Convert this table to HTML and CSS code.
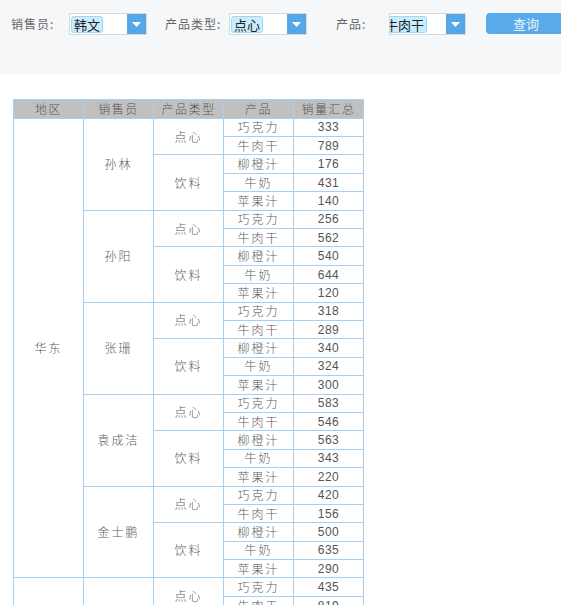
FILE: index.html
```html
<!DOCTYPE html>
<html lang="zh">
<head>
<meta charset="utf-8">
<title>销量汇总</title>
<link rel="stylesheet" href="styles.css">
</head>
<body>
<div class="toolbar">
  <label class="lbl lbl-1">销售员:</label>
  <div class="combo combo-1">
    <div class="combo-field"><span class="tag">韩文</span></div>
    <div class="combo-btn"><svg width="9" height="5" viewBox="0 0 9 5"><path d="M0 0h9L4.5 5z" fill="#fff"/></svg></div>
  </div>
  <label class="lbl lbl-2">产品类型:</label>
  <div class="combo combo-2">
    <div class="combo-field"><span class="tag">点心</span></div>
    <div class="combo-btn"><svg width="9" height="5" viewBox="0 0 9 5"><path d="M0 0h9L4.5 5z" fill="#fff"/></svg></div>
  </div>
  <label class="lbl lbl-3">产品:</label>
  <div class="combo combo-3">
    <div class="combo-field"><span class="tag tag-shift">牛肉干</span></div>
    <div class="combo-btn"><svg width="9" height="5" viewBox="0 0 9 5"><path d="M0 0h9L4.5 5z" fill="#fff"/></svg></div>
  </div>
  <button class="query">查询</button>
</div>

<div class="content">
<table class="report">
  <colgroup><col><col><col><col><col></colgroup>
  <thead>
    <tr><th>地区</th><th>销售员</th><th>产品类型</th><th>产品</th><th>销量汇总</th></tr>
  </thead>
  <tbody>
    <tr><td rowspan="25">华东</td><td rowspan="5">孙林</td><td rowspan="2">点心</td><td>巧克力</td><td class="num">333</td></tr>
    <tr><td>牛肉干</td><td class="num">789</td></tr>
    <tr><td rowspan="3">饮料</td><td>柳橙汁</td><td class="num">176</td></tr>
    <tr><td>牛奶</td><td class="num">431</td></tr>
    <tr><td>苹果汁</td><td class="num">140</td></tr>

    <tr><td rowspan="5">孙阳</td><td rowspan="2">点心</td><td>巧克力</td><td class="num">256</td></tr>
    <tr><td>牛肉干</td><td class="num">562</td></tr>
    <tr><td rowspan="3">饮料</td><td>柳橙汁</td><td class="num">540</td></tr>
    <tr><td>牛奶</td><td class="num">644</td></tr>
    <tr><td>苹果汁</td><td class="num">120</td></tr>

    <tr><td rowspan="5">张珊</td><td rowspan="2">点心</td><td>巧克力</td><td class="num">318</td></tr>
    <tr><td>牛肉干</td><td class="num">289</td></tr>
    <tr><td rowspan="3">饮料</td><td>柳橙汁</td><td class="num">340</td></tr>
    <tr><td>牛奶</td><td class="num">324</td></tr>
    <tr><td>苹果汁</td><td class="num">300</td></tr>

    <tr><td rowspan="5">袁成洁</td><td rowspan="2">点心</td><td>巧克力</td><td class="num">583</td></tr>
    <tr><td>牛肉干</td><td class="num">546</td></tr>
    <tr><td rowspan="3">饮料</td><td>柳橙汁</td><td class="num">563</td></tr>
    <tr><td>牛奶</td><td class="num">343</td></tr>
    <tr><td>苹果汁</td><td class="num">220</td></tr>

    <tr><td rowspan="5">金士鹏</td><td rowspan="2">点心</td><td>巧克力</td><td class="num">420</td></tr>
    <tr><td>牛肉干</td><td class="num">156</td></tr>
    <tr><td rowspan="3">饮料</td><td>柳橙汁</td><td class="num">500</td></tr>
    <tr><td>牛奶</td><td class="num">635</td></tr>
    <tr><td>苹果汁</td><td class="num">290</td></tr>

    <tr><td rowspan="5">华北</td><td rowspan="5">王伟</td><td rowspan="2">点心</td><td>巧克力</td><td class="num">435</td></tr>
    <tr><td>牛肉干</td><td class="num">819</td></tr>
    <tr><td rowspan="3">饮料</td><td>柳橙汁</td><td class="num">412</td></tr>
    <tr><td>牛奶</td><td class="num">376</td></tr>
    <tr><td>苹果汁</td><td class="num">258</td></tr>
  </tbody>
</table>
</div>
</body>
</html>
```

FILE: styles.css
```css
html, body {
  margin: 0;
  padding: 0;
  background: #ffffff;
  font-family: "Noto Sans CJK SC", "Noto Sans", sans-serif;
}

.toolbar {
  height: 74px;
  box-sizing: border-box;
  padding-top: 13px;
  background: #f6f7f9;
  display: flex;
  align-items: flex-start;
  overflow: hidden;
  white-space: nowrap;
}

.toolbar > * {
  flex: none;
}

.lbl {
  height: 22px;
  line-height: 22px;
  font-size: 12px;
  color: #666;
  letter-spacing: 1px;
}
.lbl-1 { margin-left: 11px; width: 58px; }
.lbl-2 { margin-left: 18px; width: 64px; }
.lbl-3 { margin-left: 29px; width: 53px; }

.combo {
  display: flex;
  height: 22px;
  box-sizing: border-box;
  border: 1px solid #d3d7de;
  background: #fff;
}
.combo-1, .combo-2 { width: 78px; }
.combo-3 { width: 77px; }

.combo-field {
  flex: 1;
  overflow: hidden;
  display: flex;
  align-items: center;
  padding-left: 1px;
}

.tag {
  flex: none;
  display: block;
  height: 17px;
  line-height: 15px;
  padding: 0 2px;
  box-sizing: border-box;
  border: 1px solid #9ed7f4;
  border-radius: 3px;
  background: #c9edfd;
  color: #222;
  font-size: 13px;
}
.tag-shift {
  margin-left: -9px;
}

.combo-btn {
  width: 19px;
  flex: none;
  background: #56a6ea;
  display: flex;
  align-items: center;
  justify-content: center;
}

.query {
  margin-left: 20px;
  width: 80px;
  height: 21px;
  border: none;
  border-radius: 4px;
  background: #5aaaeb;
  color: #e9f4fd;
  font-family: "Noto Sans CJK SC", sans-serif;
  font-size: 13px;
  line-height: 21px;
  padding: 0;
}

.content {
  padding: 25px 0 0 13px;
}

.report {
  border-collapse: collapse;
  table-layout: fixed;
  width: 350px;
  font-size: 12px;
  color: #5c5c5c;
}
.report col { width: 70px; }

.report th,
.report td {
  border: 1px solid #a7cff4;
  padding: 0;
  text-align: center;
  vertical-align: middle;
  line-height: 16px;
  font-weight: 300;
  letter-spacing: 2px;
}
.report th {
  background: #c0c0c0;
  color: #555;
  height: 17.7px;
  letter-spacing: 1.5px;
}
.report td {
  height: 17.4px;
}
.report td.num {
  letter-spacing: 0.5px;
  font-family: "Liberation Sans", sans-serif;
  font-weight: normal;
  font-size: 12px;
  color: #555;
}
```
